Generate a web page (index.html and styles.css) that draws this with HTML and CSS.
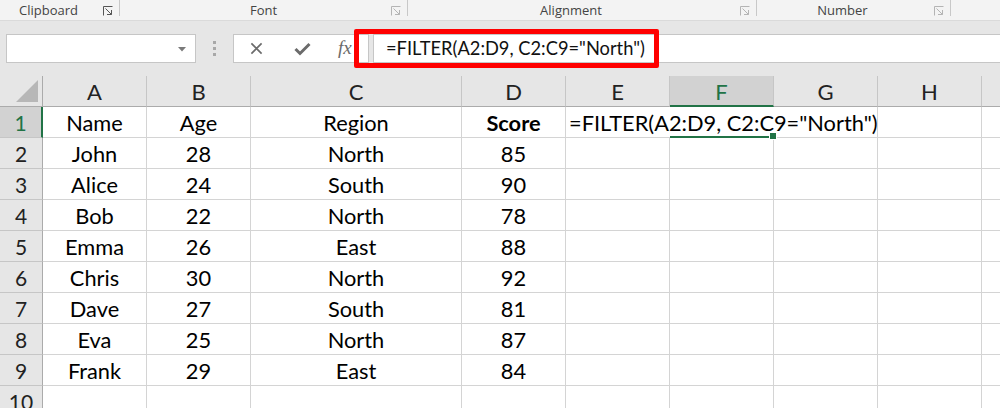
FILE: index.html
```html
<!DOCTYPE html>
<html>
<head>
<meta charset="utf-8">
<link rel="stylesheet" href="styles.css">
</head>
<body>
<div class="app">
  <div class="ribbon">
    <div class="group g-clip"><span class="glabel">Clipboard</span><svg class="launch dark" viewBox="0 0 10 10"><path d="M0.5 9.5V0.5H9.5M2.5 2.5L8.5 8.5M8.5 4V8.5H4" fill="none" stroke="currentColor" stroke-width="1"/></svg></div>
    <div class="group g-font"><span class="glabel">Font</span><svg class="launch" viewBox="0 0 10 10"><path d="M0.5 9.5V0.5H9.5M2.5 2.5L8.5 8.5M8.5 4V8.5H4" fill="none" stroke="currentColor" stroke-width="1"/></svg></div>
    <div class="group g-align"><span class="glabel">Alignment</span><svg class="launch" viewBox="0 0 10 10"><path d="M0.5 9.5V0.5H9.5M2.5 2.5L8.5 8.5M8.5 4V8.5H4" fill="none" stroke="currentColor" stroke-width="1"/></svg></div>
    <div class="group g-num"><span class="glabel">Number</span><svg class="launch" viewBox="0 0 10 10"><path d="M0.5 9.5V0.5H9.5M2.5 2.5L8.5 8.5M8.5 4V8.5H4" fill="none" stroke="currentColor" stroke-width="1"/></svg></div>
  </div>

  <div class="fbar">
    <div class="namebox"><svg class="dd" viewBox="0 0 8 5"><path d="M0 0H8L4 4.5Z" fill="#7a7a7a"/></svg></div>
    <div class="grip"><i></i><i></i><i></i></div>
    <div class="fxbox">
      <svg class="ico" viewBox="0 0 14 14"><path d="M1.5 1.5L12.5 12.5M12.5 1.5L1.5 12.5" stroke="#6b6b6b" stroke-width="1.8" fill="none"/></svg>
      <svg class="ico chk" viewBox="0 0 17 14"><path d="M1.5 7L6 11.5L15.5 2" stroke="#6b6b6b" stroke-width="3" fill="none"/></svg>
      <span class="fx">fx</span>
    </div>
    <div class="finput">=FILTER(A2:D9, C2:C9="North")</div>
    <div class="redbox"></div>
  </div>

  <div class="sheet">
    <div class="corner"><svg viewBox="0 0 22 22"><path d="M22 0V22H0Z" fill="#b7b7b7"/></svg></div>
    <div class="ch">A</div><div class="ch">B</div><div class="ch">C</div><div class="ch">D</div><div class="ch">E</div><div class="ch sel">F</div><div class="ch">G</div><div class="ch">H</div><div class="ch last"></div>

    <div class="rh sel">1</div>
    <div class="c">Name</div><div class="c">Age</div><div class="c">Region</div><div class="c b">Score</div><div class="c ovf"><span>=FILTER(A2:D9, C2:C9="North")</span></div><div class="c active nob"></div><div class="c"></div><div class="c"></div><div class="c last"></div>

    <div class="rh">2</div>
    <div class="c">John</div><div class="c">28</div><div class="c">North</div><div class="c">85</div><div class="c"></div><div class="c"></div><div class="c"></div><div class="c"></div><div class="c last"></div>

    <div class="rh">3</div>
    <div class="c">Alice</div><div class="c">24</div><div class="c">South</div><div class="c">90</div><div class="c"></div><div class="c"></div><div class="c"></div><div class="c"></div><div class="c last"></div>

    <div class="rh">4</div>
    <div class="c">Bob</div><div class="c">22</div><div class="c">North</div><div class="c">78</div><div class="c"></div><div class="c"></div><div class="c"></div><div class="c"></div><div class="c last"></div>

    <div class="rh">5</div>
    <div class="c">Emma</div><div class="c">26</div><div class="c">East</div><div class="c">88</div><div class="c"></div><div class="c"></div><div class="c"></div><div class="c"></div><div class="c last"></div>

    <div class="rh">6</div>
    <div class="c">Chris</div><div class="c">30</div><div class="c">North</div><div class="c">92</div><div class="c"></div><div class="c"></div><div class="c"></div><div class="c"></div><div class="c last"></div>

    <div class="rh">7</div>
    <div class="c">Dave</div><div class="c">27</div><div class="c">South</div><div class="c">81</div><div class="c"></div><div class="c"></div><div class="c"></div><div class="c"></div><div class="c last"></div>

    <div class="rh">8</div>
    <div class="c">Eva</div><div class="c">25</div><div class="c">North</div><div class="c">87</div><div class="c"></div><div class="c"></div><div class="c"></div><div class="c"></div><div class="c last"></div>

    <div class="rh">9</div>
    <div class="c">Frank</div><div class="c">29</div><div class="c">East</div><div class="c">84</div><div class="c"></div><div class="c"></div><div class="c"></div><div class="c"></div><div class="c last"></div>

    <div class="rh">10</div>
    <div class="c"></div><div class="c"></div><div class="c"></div><div class="c"></div><div class="c"></div><div class="c"></div><div class="c"></div><div class="c"></div><div class="c last"></div>
  </div>
</div>
</body>
</html>
```

FILE: styles.css
```css
* { box-sizing: border-box; }
html, body { margin: 0; padding: 0; }
body {
  width: 1000px;
  height: 408px;
  overflow: hidden;
  background: #e6e6e6;
  font-family: "Open Sans", "Liberation Sans", sans-serif;
}
.app { width: 1000px; height: 408px; overflow: hidden; }

/* ribbon */
.ribbon {
  height: 21px;
  background: #f3f3f3;
  border-bottom: 1px solid #dadada;
  display: flex;
  align-items: flex-start;
}
.group {
  height: 16px;
  border-right: 1px solid #c8c8c8;
  display: flex;
  align-items: center;
  justify-content: center;
  position: relative;
}
.g-clip { width: 120px; }
.g-font { width: 288px; }
.g-align { width: 349px; }
.g-num { width: 194px; }
.glabel {
  font-size: 13px;
  color: #444;
  line-height: 16px;
  margin-top: 4px;
}
.g-clip .glabel { margin-right: 22px; }
.g-align .glabel { margin-right: 22px; }
.g-num .glabel { margin-right: 22px; }
.launch {
  position: absolute;
  right: 6px;
  top: 6px;
  width: 10px;
  height: 10px;
  color: #b4b4b4;
}
.launch.dark { color: #555; }

/* formula bar */
.fbar {
  margin-top: 13px;
  height: 29px;
  display: flex;
  position: relative;
}
.namebox {
  margin-left: 6px;
  width: 190px;
  height: 29px;
  background: #fff;
  border: 1px solid #c6c6c6;
  position: relative;
}
.dd {
  position: absolute;
  right: 9px;
  top: 12px;
  width: 8px;
  height: 5px;
}
.grip {
  width: 37px;
  display: flex;
  flex-direction: column;
  align-items: center;
  justify-content: center;
  gap: 3px;
}
.grip i {
  display: block;
  width: 3px;
  height: 3px;
  background: #a8a8a8;
}
.fxbox {
  width: 136px;
  height: 29px;
  background: #fff;
  border: 1px solid #c6c6c6;
  display: flex;
  align-items: center;
  padding-left: 16px;
}
.ico { width: 13px; height: 13px; }
.chk { width: 17px; height: 14px; margin-left: 31px; }
.fx {
  margin-left: 27px;
  font-family: "Liberation Serif", "DejaVu Serif", serif;
  font-style: italic;
  font-size: 19px;
  color: #6b6b6b;
  line-height: 1;
  margin-top: -3px;
}
.finput {
  margin-left: 4px;
  flex: 1;
  height: 29px;
  background: #fff;
  border: 1px solid #c6c6c6;
  border-right: none;
  font-family: "Lato", "Open Sans", sans-serif;
  font-size: 18.3px;
  line-height: 27px;
  padding-left: 12px;
  color: #111;
  white-space: nowrap;
}
.redbox {
  position: absolute;
  left: 354px;
  top: -5px;
  width: 305px;
  height: 39px;
  border: 5px solid #ff0000;
  border-radius: 2px;
}

/* sheet */
.sheet {
  margin-top: 13px;
  display: grid;
  grid-template-columns: 43px 104px 104px 211px 104px 104px 104px 104px 104px 1fr;
  grid-auto-rows: 31px;
  background: #fff;
  font-family: "Lato", "Open Sans", sans-serif;
  font-size: 21.8px;
  color: #000;
}
.corner {
  background: #e6e6e6;
  border-right: 1px solid #ababab;
  border-bottom: 1px solid #ababab;
  display: flex;
  align-items: flex-end;
  justify-content: flex-end;
  padding: 0 4px 4px 0;
}
.corner svg { width: 22px; height: 22px; }
.ch {
  background: #e6e6e6;
  border-right: 1px solid #c6c6c6;
  border-bottom: 1px solid #ababab;
  display: flex;
  align-items: center;
  justify-content: center;
  color: #222;
  font-size: 22px;
  padding-top: 1px;
}
.ch.last { border-right: none; }
.ch.sel {
  background: #d2d2d2;
  color: #217346;
  border-bottom: 2px solid #217346;
}
.rh {
  background: #e6e6e6;
  border-right: 1px solid #ababab;
  border-bottom: 1px solid #c6c6c6;
  display: flex;
  align-items: center;
  justify-content: center;
  color: #222;
  font-size: 21px;
}
.rh.sel {
  background: #d2d2d2;
  color: #217346;
  border-right: 2px solid #217346;
}
.c {
  border-right: 1px solid #d4d4d4;
  border-bottom: 1px solid #d4d4d4;
  display: flex;
  align-items: center;
  justify-content: center;
  white-space: nowrap;
}
.c.last { border-right: none; }
.c.b { font-weight: bold; }
.c.ovf {
  justify-content: flex-start;
  padding-left: 3px;
  border-right: none;
  overflow: visible;
  position: relative;
  z-index: 1;
}
.c.nob { border-right: none; }
.c.active {
  border-bottom: 2px solid #217346;
  position: relative;
}
.c.active::after {
  content: "";
  position: absolute;
  right: -3px;
  bottom: -4px;
  width: 6px;
  height: 6px;
  background: #217346;
  border: 1px solid #fff;
}
```
